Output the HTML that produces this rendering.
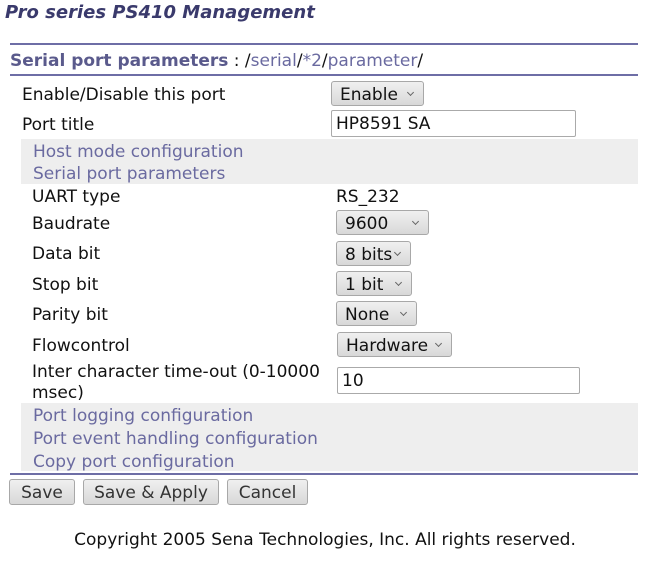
<!DOCTYPE html>
<html><head><style>
body{margin:0;width:650px;height:561px;background:#fff;font-family:"DejaVu Sans","Liberation Sans",sans-serif;font-size:17px;color:#111;position:relative;overflow:hidden}
.a{position:absolute;white-space:nowrap;line-height:20px}
.t{left:5px;top:3px;font-size:18px;font-weight:bold;font-style:italic;color:#3a3a6c}
.hl{position:absolute;left:10px;width:628px;height:2px;background:#6e6ea6}
.gray{position:absolute;left:21px;width:617px;background:#eeeeee}
.lk{color:#6a6aa0}
.sel{position:absolute;height:25px;border:1px solid #a8a8a8;border-radius:3px;background:linear-gradient(#f0f0f0,#d8d8d8);box-sizing:border-box;padding-left:8px;line-height:26px}
.sel:after{content:"";position:absolute;right:10px;top:8px;width:4px;height:4px;border-right:1px solid #666;border-bottom:1px solid #666;transform:rotate(45deg)}
.inp{position:absolute;height:27px;border:1px solid #aaa;border-radius:2px;box-sizing:border-box;padding-left:4px;line-height:27px;background:#fff}
.btn{position:absolute;top:479px;height:26px;border:1px solid #a8a8a8;border-radius:3px;background:linear-gradient(#f0f0f0,#d8d8d8);box-sizing:border-box;text-align:center;line-height:27px;color:#333}
</style></head><body>
<div class="a t">Pro series PS410 Management</div>
<div class="hl" style="top:43px"></div>
<div class="a" style="left:10px;top:51px"><b style="color:#5a5a8c">Serial port parameters</b> : /<span class="lk">serial</span>/<span class="lk">*2</span>/<span class="lk">parameter</span>/</div>
<div class="hl" style="top:74px"></div>
<div class="a" style="left:22px;top:85px">Enable/Disable this port</div>
<div class="sel" style="left:331px;top:81px;width:93px">Enable</div>
<div class="a" style="left:22px;top:115px">Port title</div>
<div class="inp" style="left:331px;top:110px;width:245px">HP8591 SA</div>
<div class="gray" style="top:139px;height:45px"></div>
<div class="a lk" style="left:33px;top:142px">Host mode configuration</div>
<div class="a lk" style="left:33px;top:164px">Serial port parameters</div>
<div class="a" style="left:32px;top:187px">UART type</div>
<div class="a" style="left:336px;top:187px">RS_232</div>
<div class="a" style="left:32px;top:214px">Baudrate</div>
<div class="sel" style="left:336px;top:210px;width:93px">9600</div>
<div class="a" style="left:32px;top:244px">Data bit</div>
<div class="sel" style="left:336px;top:241px;width:75px">8 bits</div>
<div class="a" style="left:32px;top:275px">Stop bit</div>
<div class="sel" style="left:336px;top:271px;width:76px">1 bit</div>
<div class="a" style="left:32px;top:305px">Parity bit</div>
<div class="sel" style="left:336px;top:301px;width:81px">None</div>
<div class="a" style="left:32px;top:336px">Flowcontrol</div>
<div class="sel" style="left:337px;top:332px;width:115px">Hardware</div>
<div class="a" style="left:32px;top:362px">Inter character time-out (0-10000</div>
<div class="a" style="left:32px;top:383px">msec)</div>
<div class="inp" style="left:337px;top:367px;width:243px">10</div>
<div class="gray" style="top:403px;height:68px"></div>
<div class="a lk" style="left:33px;top:406px">Port logging configuration</div>
<div class="a lk" style="left:33px;top:429px">Port event handling configuration</div>
<div class="a lk" style="left:33px;top:452px">Copy port configuration</div>
<div class="hl" style="top:473px"></div>
<div class="btn" style="left:9px;width:66px">Save</div>
<div class="btn" style="left:83px;width:136px">Save &amp; Apply</div>
<div class="btn" style="left:227px;width:81px">Cancel</div>
<div class="a" style="left:0;width:650px;text-align:center;top:530px">Copyright 2005 Sena Technologies, Inc. All rights reserved.</div>
</body></html>
